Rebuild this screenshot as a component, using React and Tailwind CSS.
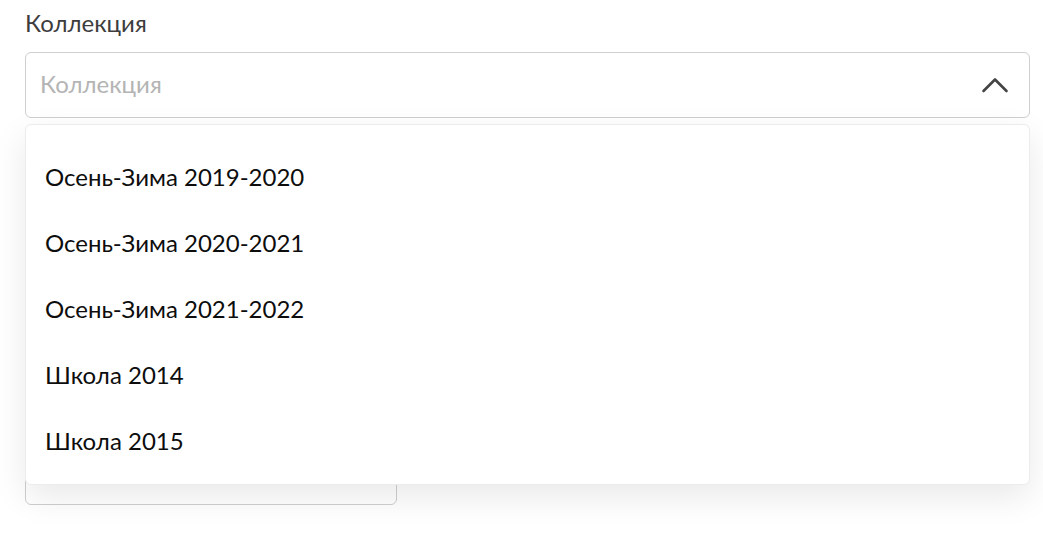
import React from 'react';

const options = [
    'Осень-Зима 2019-2020',
    'Осень-Зима 2020-2021',
    'Осень-Зима 2021-2022',
    'Школа 2014',
    'Школа 2015',
];

const ChevronUp = () => (
    <svg width="28" height="18" viewBox="0 0 28 18" fill="none" stroke="#444" strokeWidth="2.6" strokeLinecap="round" strokeLinejoin="round">
        <path d="M2.5 15 L14 3.5 L25.5 15" />
    </svg>
);

export default function App() {
    return (
        <div className="min-h-screen bg-white px-[25px] pt-[10px] pr-[13px] font-['Lato','Open_Sans',sans-serif]">
            <div className="relative">
                <label className="block text-[24px] leading-[26px] text-[#3d3d3d]">Коллекция</label>
                <div className="mt-[16px] flex h-[66px] items-center justify-between rounded-[6px] border border-[#cfcfcf] bg-white pl-[14px] pr-[20px]">
                    <span className="pb-[3px] text-[24px] text-[#b4b4b4]">Коллекция</span>
                    <ChevronUp />
                </div>

                {/* field underneath the open list */}
                <div className="mt-[20px] h-[367px] w-[372px] rounded-[6px] border border-[#cfcfcf] bg-white" />

                <div className="absolute left-0 right-0 top-[114px] rounded-[6px] border border-[#ececec] bg-white pt-[19px] pb-[10px] shadow-[0_12px_34px_rgba(0,0,0,0.09)]">
                    {options.map((o) => (
                        <div key={o} className="flex h-[66px] items-center px-[19px] text-[24px] text-[#0d0d0d]">
                            {o}
                        </div>
                    ))}
                </div>
            </div>
        </div>
    );
}
